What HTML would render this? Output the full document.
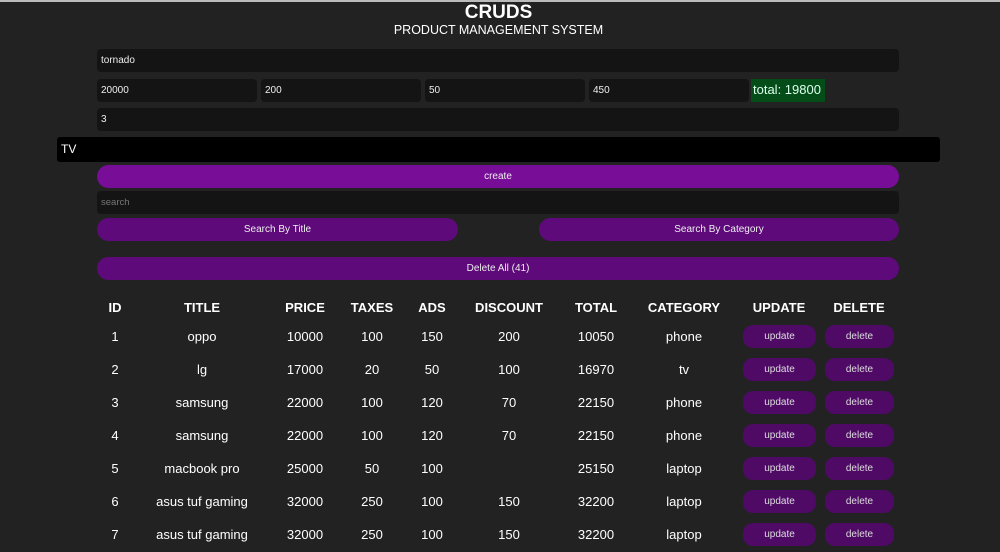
<!DOCTYPE html>
<html><head><style>
*{margin:0;padding:0;box-sizing:border-box}
body{width:1000px;height:552px;background:#222;font-family:"Liberation Sans",sans-serif;color:#fff;position:relative;overflow:hidden}
.a{position:absolute}
.in{position:absolute;background:#141414;border-radius:4px;font-size:10px;padding-left:4px;line-height:23px;color:#eee}
.btn{position:absolute;border-radius:12px;text-align:center;font-size:10px;color:#eee}
.c{position:absolute;transform:translateX(-50%);font-size:13px;white-space:nowrap}
.h{font-weight:bold}
.ub{position:absolute;background:#4f0a66;border-radius:10px;height:23px;line-height:23px;font-size:10px;text-align:center;color:#ddd}
</style></head><body>
<div class="a" style="left:0;top:0;width:1000px;height:2px;background:#bbb"></div>
<div class="a h" style="left:0;width:997px;text-align:center;top:2px;font-size:19px">CRUDS</div>
<div class="a" style="left:0;width:997px;text-align:center;top:23px;font-size:12.5px">PRODUCT MANAGEMENT SYSTEM</div>
<div class="in" style="left:97px;top:49px;width:802px;height:23px">tornado</div>
<div class="in" style="left:97px;top:79px;width:160px;height:23px">20000</div>
<div class="in" style="left:261px;top:79px;width:160px;height:23px">200</div>
<div class="in" style="left:425px;top:79px;width:160px;height:23px">50</div>
<div class="in" style="left:589px;top:79px;width:160px;height:23px">450</div>
<div class="a" style="left:751px;top:79px;width:74px;height:23px;background:#054d18;font-size:13px;line-height:22px;padding-left:2px;color:#dfe">total: 19800</div>
<div class="in" style="left:97px;top:108px;width:802px;height:23px">3</div>
<div class="a" style="left:57px;top:137px;width:883px;height:25px;background:#000;border-radius:3px;font-size:12px;line-height:25px;padding-left:4px">TV</div>
<div class="btn" style="left:97px;top:165px;width:802px;height:23px;line-height:23px;background:#780d98">create</div>
<div class="in" style="left:97px;top:191px;width:802px;height:23px;color:#777;font-size:9.5px">search</div>
<div class="btn" style="left:97px;top:218px;width:361px;height:23px;line-height:23px;background:#5e0a7a">Search By Title</div>
<div class="btn" style="left:539px;top:218px;width:360px;height:23px;line-height:23px;background:#5e0a7a">Search By Category</div>
<div class="btn" style="left:97px;top:257px;width:802px;height:23px;line-height:23px;background:#5e0a7a">Delete All (41)</div>
<div id="t"></div>
<script>
var cols=[115,202,305,372,432,509,596,684];
var hd=["ID","TITLE","PRICE","TAXES","ADS","DISCOUNT","TOTAL","CATEGORY","UPDATE","DELETE"];
var hx=[115,202,305,372,432,509,596,684,779,859];
var h="";
hd.forEach(function(t,i){h+='<div class="c h" style="left:'+hx[i]+'px;top:300px">'+t+'</div>'});
var rows=[["1","oppo","10000","100","150","200","10050","phone"],["2","lg","17000","20","50","100","16970","tv"],["3","samsung","22000","100","120","70","22150","phone"],["4","samsung","22000","100","120","70","22150","phone"],["5","macbook pro","25000","50","100","","25150","laptop"],["6","asus tuf gaming","32000","250","100","150","32200","laptop"],["7","asus tuf gaming","32000","250","100","150","32200","laptop"]];
rows.forEach(function(r,j){var y=329+33*j;r.forEach(function(t,i){h+='<div class="c" style="left:'+cols[i]+'px;top:'+y+'px">'+t+'</div>'});
h+='<div class="ub" style="left:743px;top:'+(y-4)+'px;width:73px">update</div><div class="ub" style="left:825px;top:'+(y-4)+'px;width:69px">delete</div>'});
document.getElementById("t").innerHTML=h;
</script>
</body></html>
